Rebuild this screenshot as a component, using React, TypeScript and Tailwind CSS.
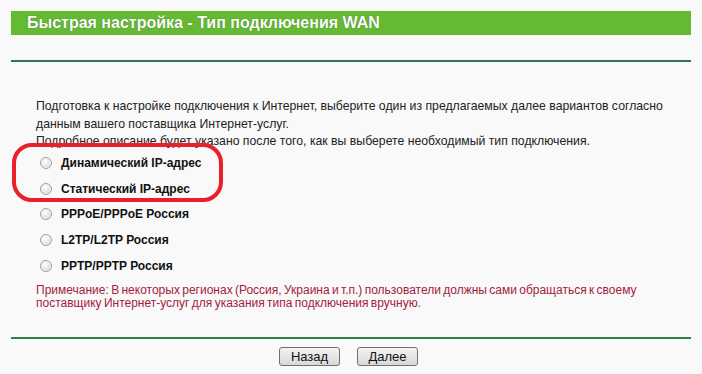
const options = [
  { label: 'Динамический IP-адрес' },
  { label: 'Статический IP-адрес' },
  { label: 'PPPoE/PPPoE Россия' },
  { label: 'L2TP/L2TP Россия' },
  { label: 'PPTP/PPTP Россия' },
];

function Radio() {
  return (
    <span className="inline-block w-[12px] h-[12px] rounded-full border border-[#a0a0a0] bg-[radial-gradient(circle_at_40%_35%,#ffffff_0%,#e4e4e4_55%,#c8c8c8_100%)] shadow-[inset_0_0_0_1px_#f4f4f4]" />
  );
}

function Button({ children }: { children: string }) {
  return (
    <button className="h-[19px] w-[61px] border border-[#707070] rounded-[3px] bg-[linear-gradient(#f3f3f3,#e6e6e6_50%,#d8d8d8)] text-[13px] leading-[17px] text-[#111]">
      {children}
    </button>
  );
}

export default function App() {
  return (
    <div className="relative w-[702px] h-[374px] bg-[#f9f9f9] px-[11px] pt-[11px] font-['Liberation_Sans',Arial,sans-serif] overflow-hidden">
      <div className="h-[24px] bg-[#66b933] pl-[16px] text-white font-bold text-[16px] leading-[24px] [text-shadow:0_0_1px_#2d6a1a]">
        Быстрая настройка - Тип подключения WAN
      </div>
      <div className="mt-[25px] h-[2px] bg-[#2f7752]" />

      <div className="pl-[25px] pt-[35px] text-[12.25px] leading-[18px] text-[#222]">
        <p>
          Подготовка к настройке подключения к Интернет, выберите один из предлагаемых далее вариантов согласно
          данным вашего поставщика Интернет-услуг.
        </p>
        <p className="leading-[16px]">Подробное описание будет указано после того, как вы выберете необходимый тип подключения.</p>
      </div>

      <div className="pl-[29px] pt-[1px] flex flex-col">
        {options.map((o) => (
          <label key={o.label} className="h-[25.75px] flex items-center gap-[9px]">
            <Radio />
            <span className="text-[12px] font-bold text-[#111]">{o.label}</span>
          </label>
        ))}
      </div>

      <p className="pl-[25px] pt-[5px] text-[12px] leading-[13.5px] text-[#a3213c] [word-spacing:-1px]">
        Примечание: В некоторых регионах (Россия, Украина и т.п.) пользователи должны сами обращаться к своему
        поставщику Интернет-услуг для указания типа подключения вручную.
      </p>

      <div className="mt-[26px] h-[2px] bg-[#2f8044]" />

      <div className="mt-[8px] flex justify-center gap-[17px] pr-[5px]">
        <Button>Назад</Button>
        <Button>Далее</Button>
      </div>

      <div className="absolute left-[12px] top-[143px] w-[211px] h-[59px] rounded-[20px] border-[4px] border-[#e8202a]" />
    </div>
  );
}
